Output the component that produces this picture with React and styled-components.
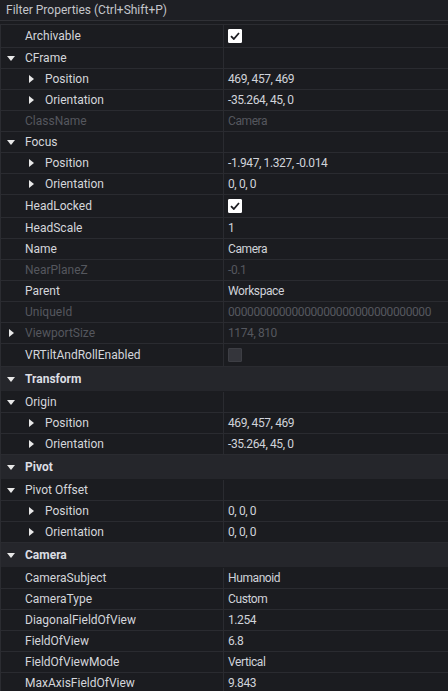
import React from 'react';
import styled, { createGlobalStyle } from 'styled-components';

const GlobalStyle = createGlobalStyle`
  html, body {
    margin: 0;
    padding: 0;
    background: #1b1c20;
  }
  body {
    font-family: Roboto, "Open Sans", sans-serif;
    font-size: 12px;
  }
`;

const rows = [
  { name: 'Archivable', check: true },
  { name: 'CFrame', open: true },
  { name: 'Position', depth: 1, closed: true, value: '469, 457, 469' },
  { name: 'Orientation', depth: 1, closed: true, value: '-35.264, 45, 0' },
  { name: 'ClassName', value: 'Camera', off: true },
  { name: 'Focus', open: true },
  { name: 'Position', depth: 1, closed: true, value: '-1.947, 1.327, -0.014' },
  { name: 'Orientation', depth: 1, closed: true, value: '0, 0, 0' },
  { name: 'HeadLocked', check: true },
  { name: 'HeadScale', value: '1' },
  { name: 'Name', value: 'Camera' },
  { name: 'NearPlaneZ', value: '-0.1', off: true },
  { name: 'Parent', value: 'Workspace' },
  { name: 'UniqueId', value: '00000000000000000000000000000000', off: true },
  { name: 'ViewportSize', value: '1174, 810', off: true, closed: true },
  { name: 'VRTiltAndRollEnabled', check: false },
  { section: 'Transform' },
  { name: 'Origin', open: true },
  { name: 'Position', depth: 1, closed: true, value: '469, 457, 469' },
  { name: 'Orientation', depth: 1, closed: true, value: '-35.264, 45, 0' },
  { section: 'Pivot' },
  { name: 'Pivot Offset', open: true },
  { name: 'Position', depth: 1, closed: true, value: '0, 0, 0' },
  { name: 'Orientation', depth: 1, closed: true, value: '0, 0, 0' },
  { section: 'Camera' },
  { name: 'CameraSubject', value: 'Humanoid' },
  { name: 'CameraType', value: 'Custom' },
  { name: 'DiagonalFieldOfView', value: '1.254' },
  { name: 'FieldOfView', value: '6.8' },
  { name: 'FieldOfViewMode', value: 'Vertical' },
  { name: 'MaxAxisFieldOfView', value: '9.843' },
];

const Panel = styled.div`
  width: 448px;
  height: 691px;
  overflow: hidden;
  background: #1b1c20;
  color: #d4d6db;
`;

const FilterBar = styled.div`
  height: 20px;
  line-height: 20px;
  padding-left: 6px;
  background: #1e1f24;
  border-bottom: 1px solid #303136;
  color: #c4c6cb;
  margin-bottom: 3px;
`;

const List = styled.div`
  border-top: 1px solid #2b2c31;
  border-left: 1px solid #2b2c31;
`;

const Row = styled.div`
  display: grid;
  grid-template-columns: 223px 1fr;
  height: ${p => p.$h}px;
  border-bottom: 1px solid #2a2b30;
  box-sizing: border-box;
`;

const NameCell = styled.div`
  display: flex;
  align-items: center;
  padding-left: ${p => p.$depth * 20}px;
  border-right: 1px solid #2a2b30;
  color: ${p => (p.$off ? '#55575e' : '#d4d6db')};
  white-space: nowrap;
`;

const ArrowSlot = styled.span`
  display: flex;
  align-items: center;
  width: 24px;
  height: 100%;
  box-sizing: border-box;
  padding-left: ${p => p.$pad}px;
  flex-shrink: 0;
`;

const ValueCell = styled.div`
  display: flex;
  align-items: center;
  padding-left: 4px;
  letter-spacing: -0.4px;
  color: ${p => (p.$off ? '#55575e' : '#d0d3da')};
  white-space: nowrap;
  overflow: hidden;
`;

const Section = styled.div`
  display: flex;
  align-items: center;
  height: ${p => p.$h}px;
  box-sizing: border-box;
  background: #25262b;
  border-bottom: 1px solid #1b1c20;
  font-weight: bold;
  color: #dcdee3;
`;

const Check = styled.div`
  width: 14px;
  height: 14px;
  box-sizing: border-box;
  border-radius: 1px;
  background: ${p => (p.$on ? '#ffffff' : '#34353b')};
  border: 1px solid ${p => (p.$on ? '#ffffff' : '#3d3e44')};
  display: flex;
  align-items: center;
  justify-content: center;
`;

const Down = () => (
  <ArrowSlot $pad={6}>
    <svg width="8" height="5" viewBox="0 0 8 5">
      <polygon points="0,0 8,0 4,5" fill="#e8e8e8" />
    </svg>
  </ArrowSlot>
);

const Right = () => (
  <ArrowSlot $pad={8}>
    <svg width="5" height="8" viewBox="0 0 5 8">
      <polygon points="0,0 5,4 0,8" fill="#e8e8e8" />
    </svg>
  </ArrowSlot>
);

export default function App() {
  return (
    <Panel>
      <GlobalStyle />
      <FilterBar>Filter Properties (Ctrl+Shift+P)</FilterBar>
      <List>
        {rows.map((r, i) => {
          if (r.section) {
            return (
              <Section key={i} $h={25}>
                <Down />
                {r.section}
              </Section>
            );
          }
          const depth = r.depth || 0;
          const isCheck = r.check !== undefined;
          return (
            <Row key={i} $h={isCheck ? 23 : 21}>
              <NameCell $depth={depth} $off={r.off}>
                {r.open ? <Down /> : r.closed ? <Right /> : <ArrowSlot $pad={0} />}
                {r.name}
              </NameCell>
              <ValueCell $off={r.off}>
                {isCheck ? (
                  <Check $on={r.check}>
                    {r.check && (
                      <svg width="10" height="8" viewBox="0 0 10 8">
                        <path d="M1 4.2 L3.8 7 L9 1" stroke="#1b1c20" strokeWidth="1.8" fill="none" />
                      </svg>
                    )}
                  </Check>
                ) : (
                  r.value
                )}
              </ValueCell>
            </Row>
          );
        })}
      </List>
    </Panel>
  );
}
